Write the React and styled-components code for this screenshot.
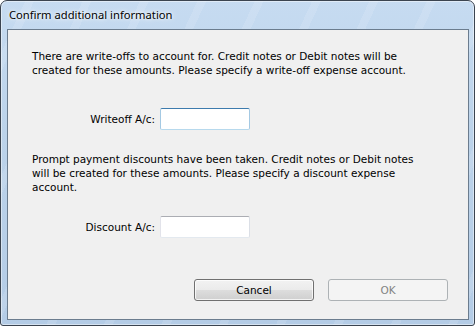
import React from 'react';
import styled, { createGlobalStyle, css } from 'styled-components';

const GlobalStyle = createGlobalStyle`
  html, body {
    margin: 0;
    padding: 0;
    background: #ffffff;
  }
  * { box-sizing: border-box; }
`;

const Window = styled.div`
  width: 475px;
  height: 326px;
  display: flex;
  flex-direction: column;
  border: 1px solid #3b4450;
  border-radius: 7px 7px 3px 3px;
  padding: 0 5px 5px 6px;
  background:
    repeating-linear-gradient(115deg, rgba(255,255,255,0) 0 22px, rgba(255,255,255,0.12) 22px 30px, rgba(255,255,255,0) 30px 52px),
    linear-gradient(180deg, #c6dbf1 0%, #bcd3ea 40%, #b4cce6 100%);
  box-shadow: inset 0 0 0 1px rgba(255,255,255,0.45);
`;

const TitleBar = styled.div`
  height: 28px;
  display: flex;
  align-items: center;
  padding-left: 2px;
  padding-bottom: 2px;
`;

const Title = styled.span`
  font-family: "Noto Sans", "Open Sans", sans-serif;
  font-size: 11.2px;
  color: #000000;
  text-shadow: 0 0 6px rgba(255,255,255,0.9), 0 0 3px rgba(255,255,255,0.9);
`;

const Client = styled.div`
  flex: 1;
  display: flex;
  flex-direction: column;
  background: #f0f0f0;
  border: 1px solid #6b7c8e;
  padding: 19px 20px 18px 24px;
  font-family: "DejaVu Sans", sans-serif;
  font-size: 10.5px;
  color: #000000;
`;

const Message = styled.p`
  margin: ${props => props.$top || 0}px 0 0;
  line-height: 14px;
  max-width: 395px;
`;

const FieldRow = styled.div`
  display: flex;
  align-items: center;
  margin: ${props => props.$top}px 0 0 -24px;
`;

const FieldLabel = styled.label`
  width: 152px;
  text-align: right;
  padding-right: 5px;
`;

const TextBox = styled.input`
  width: 90px;
  height: 22px;
  margin: 0;
  padding: 2px 3px;
  border: 1px solid;
  border-radius: 2px;
  background: #ffffff;
  font: inherit;
  outline: none;
  ${props =>
    props.$hot
      ? css`
          border-color: #3d7bad #a4c9e3 #b7d9ed #a4c9e3;
        `
      : css`
          border-color: #abadb3 #dbdfe6 #e3e9ef #e2e3ea;
        `}
`;

const ButtonBar = styled.div`
  margin-top: auto;
  display: flex;
  justify-content: flex-end;
  gap: 14px;
`;

const Button = styled.button`
  width: 120px;
  height: 22px;
  margin: 0;
  padding: 0;
  border: 1px solid #707070;
  border-radius: 3px;
  font-family: "DejaVu Sans", sans-serif;
  font-size: 10.5px;
  color: #000000;
  background: linear-gradient(180deg, #f2f2f2 0%, #ebebeb 48%, #dddddd 52%, #cfcfcf 100%);
  box-shadow: inset 0 0 0 1px rgba(255,255,255,0.75);

  &:disabled {
    border-color: #adb2b5;
    background: #f4f4f4;
    color: #838383;
    box-shadow: none;
  }
`;

export default function App() {
  return (
    <>
      <GlobalStyle />
      <Window>
        <TitleBar>
          <Title>Confirm additional information</Title>
        </TitleBar>
        <Client>
          <Message>
            There are write-offs to account for. Credit notes or Debit notes will be
            created for these amounts. Please specify a write-off expense account.
          </Message>
          <FieldRow $top={31}>
            <FieldLabel>Writeoff A/c:</FieldLabel>
            <TextBox $hot />
          </FieldRow>
          <Message $top={22}>
            Prompt payment discounts have been taken. Credit notes or Debit notes
            will be created for these amounts. Please specify a discount expense
            account.
          </Message>
          <FieldRow $top={22}>
            <FieldLabel>Discount A/c:</FieldLabel>
            <TextBox />
          </FieldRow>
          <ButtonBar>
            <Button>Cancel</Button>
            <Button disabled>OK</Button>
          </ButtonBar>
        </Client>
      </Window>
    </>
  );
}
